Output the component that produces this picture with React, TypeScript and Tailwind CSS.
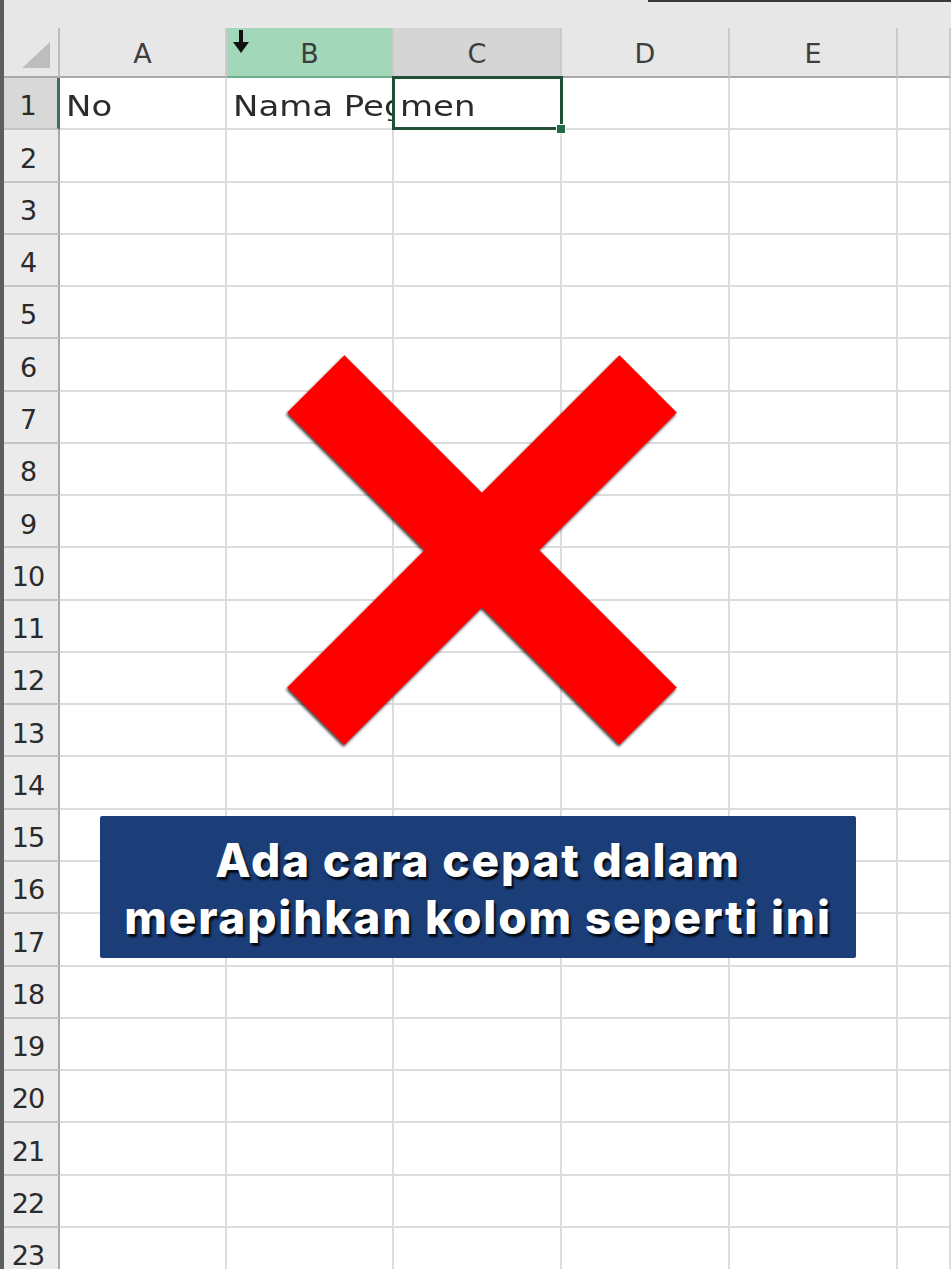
import React from 'react';

const COLS = ['A', 'B', 'C', 'D', 'E', ''];
const ROWS = Array.from({ length: 23 }, (_, i) => i + 1);

function ColHeader({ label, index }: { label: string; index: number }) {
  // B is the highlighted (green) column, C is the active cell's column
  const bg =
    index === 1 ? 'bg-[#a3d7b9] border-b-[#6fae8a]' : index === 2 ? 'bg-[#d5d5d5] border-b-[#9a9a9a]' : 'bg-[#e7e7e7] border-b-[#a8a8a8]';
  return (
    <div className={`relative flex h-[50px] items-center justify-center border-r-2 border-b-2 border-r-[#cbcbcb] pt-[4px] ${bg}`}>
      {index === 1 && (
        <svg className="absolute left-[4px] top-[1px]" width="20" height="26" viewBox="0 0 20 26">
          <rect x="8" y="1" width="4" height="14" fill="#111" />
          <polygon points="2,13 18,13 10,24" fill="#111" />
        </svg>
      )}
      <span className="text-[27px] text-[#3e3e3e]">{label}</span>
    </div>
  );
}

function RowHeader({ n }: { n: number }) {
  const active = n === 1;
  return (
    <div
      className={`flex h-[52.27px] items-center justify-center border-b-2 border-b-[#c4c4c4] pt-[7px] pr-[6px] ${
        active ? 'border-r-[3px] border-r-[#3f6f52] bg-[#d8d8d8]' : 'border-r-2 border-r-[#a9a9a9] bg-[#ebebeb]'
      }`}
    >
      <span className="text-[27px] tracking-[-1px] text-[#2a2a2a]">{n}</span>
    </div>
  );
}

function Cell({ row, col }: { row: number; col: number }) {
  let text = '';
  if (row === 1 && col === 0) text = 'No';
  if (row === 1 && col === 1) text = 'Nama Pegawai';
  if (row === 1 && col === 2) text = 'men';
  const selected = row === 1 && col === 2;
  return (
    <div className="relative flex h-[52.27px] items-center border-r-2 border-b-2 border-[#dcdcdc] bg-white pt-[7px]">
      <div className="w-full overflow-hidden whitespace-nowrap pl-[6px] text-[29px] leading-none text-[#2b2b2b]">
        <span className="inline-block origin-left scale-x-[1.17]">{text}</span>
      </div>
      {selected && (
        <>
          <div className="absolute -left-[2px] -top-[2px] -right-[3px] -bottom-[2px] z-10 border-[3px] border-[#1f4f35]" />
          <div className="absolute -right-[6px] -bottom-[6px] z-10 h-[10px] w-[10px] border border-white bg-[#1f6b45]" />
        </>
      )}
    </div>
  );
}

function RedCross() {
  return (
    <svg className="absolute left-[272px] top-[340px]" width="420" height="420" viewBox="0 0 420 420">
      <defs>
        <filter id="xshadow" x="-10%" y="-10%" width="120%" height="120%">
          <feDropShadow dx="-1" dy="2" stdDeviation="1.5" floodColor="#000" floodOpacity="0.8" />
        </filter>
      </defs>
      <g filter="url(#xshadow)" fill="#ff0000">
        <rect x="-25" y="169.5" width="470" height="81" transform="rotate(45 210 210)" />
        <rect x="-25" y="169.5" width="470" height="81" transform="rotate(-45 210 210)" />
      </g>
    </svg>
  );
}

export default function App() {
  return (
    <div className="relative h-[1269px] w-[951px] overflow-hidden bg-white font-['DejaVu_Sans',sans-serif]">
      {/* window top strip */}
      <div className="flex h-[28px] bg-[#e8e8e8]">
        <div className="w-[4px] bg-[#5d5d5d]" />
        <div className="w-[644px]" />
        <div className="flex-1 border-t-2 border-[#3a3a3a]" />
      </div>

      <div className="flex">
        <div className="w-[4px] shrink-0 bg-[#5d5d5d]" />
        <div className="grid flex-1 grid-cols-[56px_167px_167px_168px_168px_168px_1fr]">
          {/* corner */}
          <div className="flex h-[50px] items-end justify-end border-r-2 border-b-2 border-r-[#bdbdbd] border-b-[#a8a8a8] bg-[#e7e7e7] pr-[6px] pb-[6px]">
            <svg width="32" height="30" viewBox="0 0 32 30">
              <polygon points="2,28 30,28 30,2" fill="#bdbdbd" />
            </svg>
          </div>
          {COLS.map((c, i) => (
            <ColHeader key={i} label={c} index={i} />
          ))}

          {ROWS.map((r) => (
            <React.Fragment key={r}>
              <RowHeader n={r} />
              {COLS.map((_, ci) => (
                <Cell key={ci} row={r} col={ci} />
              ))}
            </React.Fragment>
          ))}
        </div>
      </div>

      <RedCross />

      {/* caption */}
      <div className="absolute left-[100px] top-[816px] flex h-[142px] w-[756px] flex-col items-center justify-center rounded-[2px] bg-[#1b3e78] pt-[4px]">
        <p className="font-['Inter',sans-serif] text-[46px] leading-[57px] font-extrabold tracking-[1.8px] text-white [text-shadow:2px_3px_2px_rgba(0,0,0,0.85)]">
          Ada cara cepat dalam
        </p>
        <p className="font-['Inter',sans-serif] text-[46px] leading-[57px] font-extrabold tracking-[1.8px] text-white [text-shadow:2px_3px_2px_rgba(0,0,0,0.85)]">
          merapihkan kolom seperti ini
        </p>
      </div>
    </div>
  );
}
